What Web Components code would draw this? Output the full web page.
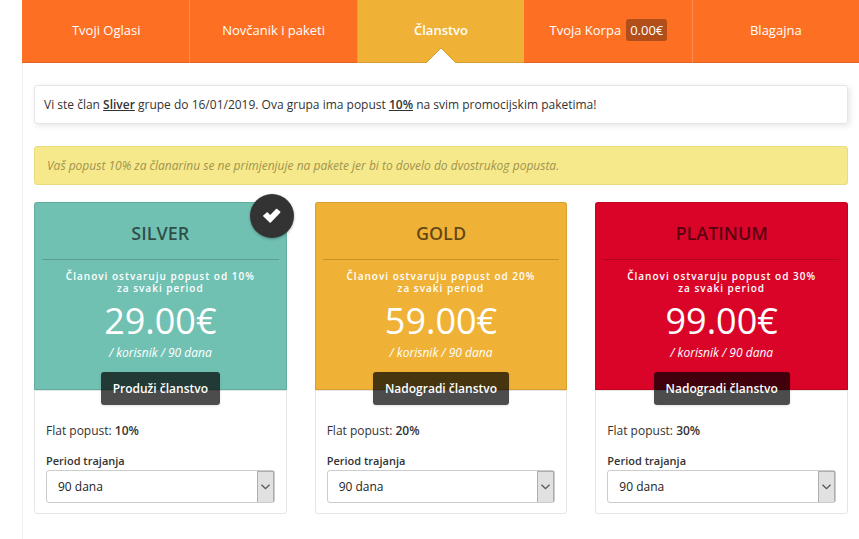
<!DOCTYPE html>
<html lang="hr">
<head>
<meta charset="utf-8">
<title>Članstvo</title>
<style>
  body { margin: 0; background: #fff; color: #333; font: 12px/18px "Open Sans", "Noto Sans", sans-serif; }
</style>
</head>
<body>
<account-page>
  <account-nav slot="nav">
    <nav-tab href="#oglasi">Tvoji Oglasi</nav-tab>
    <nav-tab href="#paketi">Novčanik i paketi</nav-tab>
    <nav-tab href="#clanstvo" active>Članstvo</nav-tab>
    <nav-tab href="#korpa" badge="0.00€">Tvoja Korpa</nav-tab>
    <nav-tab href="#blagajna">Blagajna</nav-tab>
  </account-nav>
  <notice-box>Vi ste član <b>Sliver</b> grupe do 16/01/2019. Ova grupa ima popust <b>10%</b> na svim promocijskim paketima!</notice-box>
  <notice-box kind="warning">Vaš popust 10% za članarinu se ne primjenjuje na pakete jer bi to dovelo do dvostrukog popusta.</notice-box>
  <plan-list>
    <plan-card name="SILVER" discount="10%" price="29.00€" action="Produži članstvo" current style="--plan:#71c1b3"></plan-card>
    <plan-card name="GOLD" discount="20%" price="59.00€" action="Nadogradi članstvo" style="--plan:#efb136"></plan-card>
    <plan-card name="PLATINUM" discount="30%" price="99.00€" action="Nadogradi članstvo" style="--plan:#da0429"></plan-card>
  </plan-list>
</account-page>
<script>
class BaseElement extends HTMLElement {
  connectedCallback() {
    if (!this.shadowRoot) this.attachShadow({ mode: "open" }).innerHTML = this.render();
  }
}

customElements.define("account-page", class extends BaseElement {
  render() {
    return `<style>
      :host { margin-left: 22px; min-height: 100vh; display: flex; flex-direction: column; }
      main { flex: 1; display: flex; flex-direction: column; border-left: 1px solid #eee; padding: 22px 11px 24px; }
    </style>
    <slot name="nav"></slot>
    <main><slot></slot></main>`;
  }
});

customElements.define("account-nav", class extends BaseElement {
  render() {
    return `<style>
      :host { display: block; }
      nav { display: grid; grid-template-columns: repeat(5, 1fr); background: #fd7024; }
    </style><nav><slot></slot></nav>`;
  }
});

customElements.define("nav-tab", class extends BaseElement {
  render() {
    const badge = this.getAttribute("badge");
    return `<style>
      :host { display: block; border-left: 1px solid #fd8d50; }
      :host(:first-child) { border-left-color: #fd7024; }
      :host([active]) + :host { border-left: 0; }
      :host([badge]) { border-left-color: #fd7024; }
      a { box-sizing: border-box; position: relative; display: flex; align-items: center; justify-content: center; gap: 5px;
          height: 63px; padding-bottom: 2px; border-bottom: 1px solid #e06522; color: #fff; font-size: 13px; line-height: 20px; text-decoration: none; }
      :host([active]) a { background: #efb136; border-bottom-color: #d59f33; font-weight: 600; }
      .badge { padding: 0 4px; line-height: 22px; background: #b14e19; border-radius: 3px; }
      svg { position: absolute; bottom: -1px; left: 50%; margin-left: -15px; display: block; }
    </style>
    <a href="${this.getAttribute("href")}"><slot></slot>${badge ? `<span class="badge">${badge}</span>` : ""}${this.hasAttribute("active")
      ? `<svg width="30" height="16" viewBox="0 0 30 16" aria-hidden="true"><path d="M0 16 15 1 30 16Z" fill="#fff"/><path d="M0 16 15 1 30 16" fill="none" stroke="#d59f33"/></svg>` : ""}</a>`;
  }
});

customElements.define("notice-box", class extends BaseElement {
  render() {
    return `<style>
      :host { display: block; margin-bottom: 22px; padding: 10px 9px; border: 1px solid #e5e5e5; border-radius: 3px; line-height: 17px; box-shadow: 2px 2px 6px rgba(0,0,0,.1); }
      :host([kind=warning]) { margin-bottom: 17px; padding-inline: 12px; background: #f6e98b; border-color: #e9dc7e; color: #9f944e; font-style: italic; box-shadow: none; }
      ::slotted(b) { font-weight: 600; text-decoration: underline; }
    </style><slot></slot>`;
  }
});

customElements.define("plan-list", class extends BaseElement {
  render() {
    return `<style>
      :host { display: grid; grid-template-columns: repeat(3, 1fr); gap: 28px; }
    </style><slot></slot>`;
  }
});

customElements.define("plan-card", class extends BaseElement {
  render() {
    const a = n => this.getAttribute(n);
    return `<style>
      :host { display: block; position: relative; }
      header { box-sizing: border-box; display: flex; flex-direction: column; align-items: center; text-align: center; height: 188px;
        background: var(--plan); border: 1px solid rgba(0,0,0,.1); border-radius: 3px 3px 0 0; padding: 0 7px; color: #fff; }
      h2 { margin: 0; align-self: stretch; padding: 18px 0 14px; font-size: 18px; line-height: 24px; font-weight: 600; color: rgba(0,0,0,.6); border-bottom: 1px solid rgba(0,0,0,.18); }
      .tag { margin: 10px 0 0; max-width: 200px; font-size: 10px; line-height: 12px; font-weight: 600; letter-spacing: 1px; }
      .price { margin: 3px 0 0; font-size: 36px; line-height: 48px; }
      .per { margin: 0; line-height: 16px; font-style: italic; }
      button { flex: none; margin: 11px 0 0; height: 33px; padding: 0 12px; border: 0; border-radius: 3px; background: rgba(0,0,0,.7);
        color: #fff; font: 600 12px/18px "Open Sans", "Noto Sans", sans-serif; box-shadow: 0 1px 3px rgba(0,0,0,.1); }
      .body { padding: 31px 11px 10px; border: 1px solid #e5e5e5; border-radius: 0 0 3px 3px; }
      .flat { margin: 0 0 13px; line-height: 17px; }
      strong { font-weight: 600; }
      label { display: block; padding-bottom: 1px; font-size: 11px; line-height: 17px; font-weight: 600; }
      .select { display: grid; }
      .select > * { grid-area: 1 / 1; }
      select { appearance: none; box-sizing: border-box; width: 100%; height: 33px; padding: 0 28px 0 11px; border: 1px solid #ccc; border-radius: 3px;
        background: #fff; color: #222; font: 12px/18px "Open Sans", "Noto Sans", sans-serif; }
      .arrow { box-sizing: border-box; justify-self: end; display: flex; align-items: center; justify-content: center; width: 17px; margin: 1px; border: 1px solid #adadad; border-width: 1px 1px 0; background: #e1e1e1; pointer-events: none; }
      .check { position: absolute; top: -8px; right: -7px; width: 44px; height: 44px; border-radius: 50%; background: #333; display: flex; align-items: center; justify-content: center; box-shadow: 0 1px 3px rgba(0,0,0,.3); }
    </style>
    <header>
      <h2>${a("name")}</h2>
      <p class="tag">Članovi ostvaruju popust od ${a("discount")} za svaki period</p>
      <p class="price">${a("price")}</p>
      <p class="per">/ korisnik / 90 dana</p>
      <button type="button">${a("action")}</button>
    </header>
    <div class="body">
      <p class="flat">Flat popust: <strong>${a("discount")}</strong></p>
      <label for="period">Period trajanja</label>
      <div class="select">
        <select id="period"><option>90 dana</option></select>
        <span class="arrow"><svg width="9" height="6" viewBox="0 0 9 6" aria-hidden="true"><path d="M.5 .7 4.5 4.7 8.5 .7" fill="none" stroke="#555" stroke-width="1.3"/></svg></span>
      </div>
    </div>
    ${this.hasAttribute("current") ? `<span class="check"><svg width="20" height="16" viewBox="0 0 20 16" role="img" aria-label="Aktivno"><path d="M2.4 6.6 4.6 4.4Q5.2 3.9 5.8 4.4L8.2 6.9 14 1.1Q14.6.6 15.2 1.1L18.2 3.6Q18.7 4.2 18.2 4.8L8.8 14.4Q8.2 15 7.6 14.4L1.2 8.3Q.8 7.8 1.2 7.4Z" fill="#fff"/></svg></span>` : ""}`;
  }
});
</script>
</body>
</html>
